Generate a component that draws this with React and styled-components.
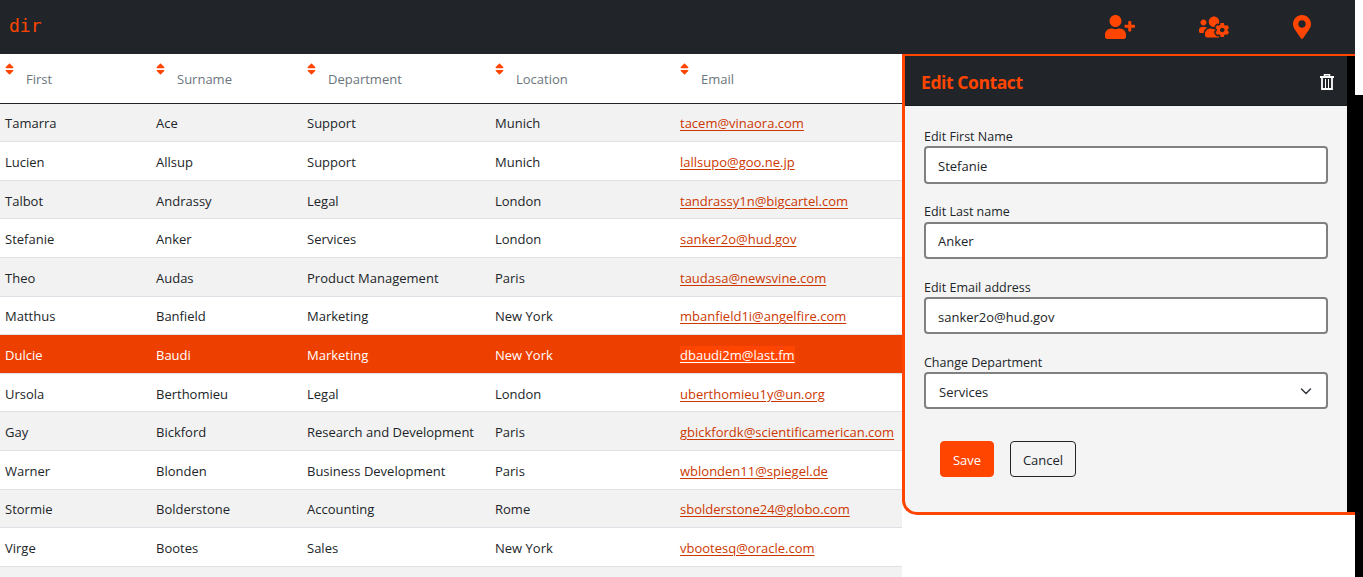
import React from "react";
import styled, { createGlobalStyle } from "styled-components";
import { FaUserPlus, FaUsersCog, FaMapMarkerAlt, FaSort } from "react-icons/fa";

const Global = createGlobalStyle`
  *, *::before, *::after { box-sizing: border-box; }
  html, body { margin: 0; overflow: hidden; background: #fff; }
  body {
    font-family: "Open Sans", "Noto Sans", sans-serif;
    font-size: 13px;
    line-height: 21px;
    color: #212529;
  }
  input, button, select { font: inherit; color: inherit; letter-spacing: inherit; }
`;

const Page = styled.div`
  display: grid;
  grid-template-columns: 1355px 8px;
  width: 1363px;
  height: 577px;
  overflow: hidden;
`;
const Main = styled.div`
  display: flex;
  flex-direction: column;
  height: 577px;
  overflow: hidden;
`;
const PageScroll = styled.div`
  padding-top: 95px;
  background: #fff;
`;
const ScrollTrack = styled.div`
  height: 100%;
  background: #000;
`;
const NavBar = styled.header`
  display: flex;
  flex: none;
  justify-content: space-between;
  align-items: center;
  height: 54px;
  padding: 0 44px 0 9px;
  background: #212529;
  color: #ff4500;
`;
const Brand = styled.span`
  font-family: "DejaVu Sans Mono", monospace;
  font-size: 18px;
  line-height: 24px;
  padding-bottom: 2px;
`;
const NavIcons = styled.nav`
  display: flex;
  gap: 64px;
  svg { display: block; height: 24px; width: 30px; }
  svg:last-child { width: 18px; }
`;
const Body = styled.div`
  display: flex;
  align-items: flex-start;
`;
const Table = styled.div`
  width: 902px;
  flex: none;
`;
const Row = styled.div`
  display: grid;
  grid-template-columns: 151px 151px 188px 185px 1fr;
  padding-left: 5px;
  white-space: nowrap;
`;
const HeadRow = styled(Row)`
  height: 49.6px;
  border-bottom: 1px solid #212529;
  color: #6c757d;
`;
const HeadCell = styled.div`
  display: flex;
  padding-top: 8px;
  svg { width: 9px; height: 14px; flex: none; color: #ff4500; }
  span { margin: 7px 0 0 12px; }
`;
const DataRow = styled(Row)`
  height: 38.6px;
  padding-top: 9.85px;
  border-bottom: 1px solid #dee2e6;
  background: ${(p) => (p.$active ? "#ed4000" : p.$odd ? "#f2f2f2" : "#fff")};
  color: ${(p) => (p.$active ? "#fff" : "#212529")};
`;
const Mail = styled.a`
  color: ${(p) => (p.$active ? "#fff" : "#cc3700")};
  background: ${(p) => (p.$active ? "#ff4500" : "transparent")};
  text-decoration: underline;
  text-decoration-skip-ink: auto;
  text-underline-offset: 1.5px;
`;
const Panel = styled.section`
  display: grid;
  grid-template-columns: 1fr 8px;
  width: 453px;
  height: 461px;
  border: solid #ff4500;
  border-width: 2px 0 3px 3px;
  border-bottom-left-radius: 15px;
  overflow: hidden;
  background: #f4f4f4;
`;
const PanelHead = styled.div`
  display: flex;
  justify-content: space-between;
  align-items: center;
  height: 50px;
  padding: 2px 13px 0 16px;
  background: #212529;
  border-bottom: 1px solid #181b1e;
  color: #fff;
`;
const Title = styled.h2`
  margin: 0;
  font-size: 17.5px;
  letter-spacing: -0.42px;
  line-height: 24px;
  font-weight: 700;
  color: #ff4500;
`;
const Form = styled.form`
  padding: 20px 19px 0;
`;
const Field = styled.label`
  display: block;
  height: 75.3px;
  font-size: 12.5px;
  line-height: 22px;
`;
const Control = styled.div`
  display: flex;
  align-items: center;
  justify-content: space-between;
  height: ${(p) => (p.$select ? 36.6 : 37.4)}px;
  margin-top: -1.6px;
  padding: 2px 14px 0 ${(p) => (p.$select ? 13 : 12)}px;
  background: #fff;
  border: 2px solid #808080;
  border-radius: 4px;
  font-size: 13px;
`;
const Input = styled.input`
  width: 100%;
  padding: 0;
  border: 0;
  outline: 0;
  background: transparent;
`;
const Actions = styled.div`
  display: flex;
  gap: 16px;
  padding: 13.4px 16px;
`;
const Button = styled.button`
  width: ${(p) => (p.$primary ? 54 : 66)}px;
  height: 36px;
  padding: 3px 0 0;
  border: 1px solid ${(p) => (p.$primary ? "#ff4500" : "#212529")};
  border-radius: 4px;
  background: ${(p) => (p.$primary ? "#ff4500" : "transparent")};
  color: ${(p) => (p.$primary ? "#fff" : "#212529")};
`;

const columns = ["First", "Surname", "Department", "Location", "Email"];
const people = [
  ["Tamarra", "Ace", "Support", "Munich", "tacem@vinaora.com"],
  ["Lucien", "Allsup", "Support", "Munich", "lallsupo@goo.ne.jp"],
  ["Talbot", "Andrassy", "Legal", "London", "tandrassy1n@bigcartel.com"],
  ["Stefanie", "Anker", "Services", "London", "sanker2o@hud.gov"],
  ["Theo", "Audas", "Product Management", "Paris", "taudasa@newsvine.com"],
  ["Matthus", "Banfield", "Marketing", "New York", "mbanfield1i@angelfire.com"],
  ["Dulcie", "Baudi", "Marketing", "New York", "dbaudi2m@last.fm"],
  ["Ursola", "Berthomieu", "Legal", "London", "uberthomieu1y@un.org"],
  ["Gay", "Bickford", "Research and Development", "Paris", "gbickfordk@scientificamerican.com"],
  ["Warner", "Blonden", "Business Development", "Paris", "wblonden11@spiegel.de"],
  ["Stormie", "Bolderstone", "Accounting", "Rome", "sbolderstone24@globo.com"],
  ["Virge", "Bootes", "Sales", "New York", "vbootesq@oracle.com"],
  ["", "", "", "", ""],
];
const fields = [
  ["Edit First Name", "Stefanie"],
  ["Edit Last name", "Anker"],
  ["Edit Email address", "sanker2o@hud.gov"],
];

const TrashIcon = () => (
  <svg width="14" height="16" viewBox="0 0 14 16" fill="none" stroke="#fff">
    <path d="M0 3h14" strokeWidth="2" />
    <path d="M4.5 2V.8h5V2" strokeWidth="1.5" />
    <path d="M2 3v12h10V3" strokeWidth="1.8" />
    <path d="M5.5 5v9M8.5 5v9" strokeWidth="1" />
  </svg>
);
const Chevron = () => (
  <svg width="12" height="12" viewBox="0 0 16 16" fill="none" stroke="#343a40" strokeWidth="2" strokeLinecap="round" strokeLinejoin="round">
    <path d="m2 4 6 6 6-6" />
  </svg>
);

export default function App() {
  return (
    <Page>
      <Global />
      <Main>
        <NavBar>
          <Brand>dir</Brand>
          <NavIcons>
            <FaUserPlus />
            <FaUsersCog />
            <FaMapMarkerAlt />
          </NavIcons>
        </NavBar>
        <Body>
          <Table>
            <HeadRow>
              {columns.map((c) => (
                <HeadCell key={c}><FaSort /><span>{c}</span></HeadCell>
              ))}
            </HeadRow>
            {people.map(([first, last, dept, loc, mail], i) => (
              <DataRow key={i} $odd={i % 2 === 0} $active={first === "Dulcie"}>
                <span>{first}</span>
                <span>{last}</span>
                <span>{dept}</span>
                <span>{loc}</span>
                <span><Mail $active={first === "Dulcie"}>{mail}</Mail></span>
              </DataRow>
            ))}
          </Table>
          <Panel>
            <div>
              <PanelHead><Title>Edit Contact</Title><TrashIcon /></PanelHead>
              <Form>
                {fields.map(([label, value]) => (
                  <Field key={label}>{label}<Control><Input defaultValue={value} /></Control></Field>
                ))}
                <Field as="div">Change Department<Control $select><span>Services</span><Chevron /></Control></Field>
                <Actions>
                  <Button type="button" $primary>Save</Button>
                  <Button type="button">Cancel</Button>
                </Actions>
              </Form>
            </div>
            <ScrollTrack />
          </Panel>
        </Body>
      </Main>
      <PageScroll><ScrollTrack /></PageScroll>
    </Page>
  );
}
